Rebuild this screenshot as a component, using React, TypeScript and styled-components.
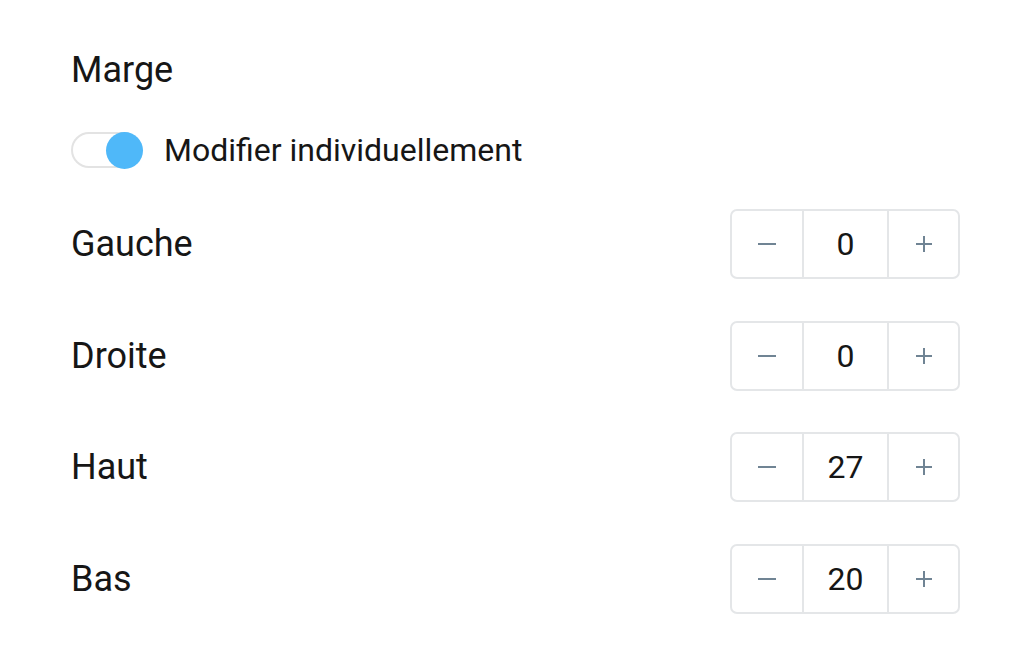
import React, { useState } from 'react';
import styled, { createGlobalStyle } from 'styled-components';

const GlobalStyle = createGlobalStyle`
  html, body {
    margin: 0;
    padding: 0;
    background: #ffffff;
  }
  body {
    font-family: Roboto, "Liberation Sans", Arial, sans-serif;
    color: #161616;
  }
`;

type Side = { key: string; label: string; value: number };

const initialSides: Side[] = [
  { key: 'left', label: 'Gauche', value: 0 },
  { key: 'right', label: 'Droite', value: 0 },
  { key: 'top', label: 'Haut', value: 27 },
  { key: 'bottom', label: 'Bas', value: 20 },
];

const MinusIcon = () => (
  <svg width="20" height="20" viewBox="0 0 20 20" aria-hidden="true">
    <line x1="1" y1="10" x2="19" y2="10" stroke="currentColor" strokeWidth="2" />
  </svg>
);

const PlusIcon = () => (
  <svg width="20" height="20" viewBox="0 0 20 20" aria-hidden="true">
    <line x1="2" y1="10" x2="18" y2="10" stroke="currentColor" strokeWidth="2" />
    <line x1="10" y1="2" x2="10" y2="18" stroke="currentColor" strokeWidth="2" />
  </svg>
);

const App: React.FC = () => {
  const [individual, setIndividual] = useState(true);
  const [sides, setSides] = useState(initialSides);

  const bump = (key: string, delta: number) =>
    setSides((s) => s.map((x) => (x.key === key ? { ...x, value: Math.max(0, x.value + delta) } : x)));

  return (
    <>
      <GlobalStyle />
      <Panel>
        <Title>Marge</Title>
        <ToggleRow>
          <Switch type="button" $on={individual} onClick={() => setIndividual((v) => !v)} aria-pressed={individual}>
            <Knob $on={individual} />
          </Switch>
          <ToggleLabel>Modifier individuellement</ToggleLabel>
        </ToggleRow>
        <Rows>
          {sides.map((side) => (
            <Row key={side.key}>
              <RowLabel>{side.label}</RowLabel>
              <Stepper>
                <StepButton type="button" onClick={() => bump(side.key, -1)} aria-label="Diminuer">
                  <MinusIcon />
                </StepButton>
                <Value>{side.value}</Value>
                <StepButton type="button" onClick={() => bump(side.key, 1)} aria-label="Augmenter">
                  <PlusIcon />
                </StepButton>
              </Stepper>
            </Row>
          ))}
        </Rows>
      </Panel>
    </>
  );
};

export default App;

const Panel = styled.div`
  box-sizing: border-box;
  width: 1024px;
  height: 651px;
  padding: 50px 64px 0 71px;
  display: flex;
  flex-direction: column;
`;

const Title = styled.div`
  height: 40px;
  line-height: 40px;
  font-size: 36px;
  font-weight: 400;
`;

const ToggleRow = styled.div`
  margin-top: 40px;
  height: 40px;
  display: flex;
  align-items: center;
  gap: 23px;
`;

const Switch = styled.button<{ $on: boolean }>`
  position: relative;
  box-sizing: border-box;
  width: 70px;
  height: 36px;
  padding: 0;
  border-radius: 18px;
  border: 2px solid #e3e3e3;
  background: #ffffff;
  cursor: pointer;
`;

const Knob = styled.span<{ $on: boolean }>`
  position: absolute;
  top: -2px;
  left: ${(p) => (p.$on ? '33px' : '-2px')};
  width: 37px;
  height: 37px;
  border-radius: 50%;
  background: ${(p) => (p.$on ? '#4fb8f9' : '#f4f4f4')};
  transition: left 150ms ease;
`;

const ToggleLabel = styled.span`
  font-size: 32px;
  line-height: 40px;
`;

const Rows = styled.div`
  margin-top: 39px;
  display: flex;
  flex-direction: column;
  gap: 41.5px;
`;

const Row = styled.div`
  display: flex;
  align-items: center;
  justify-content: space-between;
  height: 70px;
`;

const RowLabel = styled.span`
  font-size: 36px;
`;

const Stepper = styled.div`
  box-sizing: border-box;
  display: grid;
  grid-template-columns: 70px 87px 1fr;
  width: 230px;
  height: 70px;
  border: 2px solid #e4e6e8;
  border-radius: 7px;
  overflow: hidden;
`;

const StepButton = styled.button`
  display: flex;
  align-items: center;
  justify-content: center;
  border: none;
  background: transparent;
  color: #708494;
  padding: 0;
  cursor: pointer;
`;

const Value = styled.div`
  display: flex;
  align-items: center;
  justify-content: center;
  border-left: 2px solid #e4e6e8;
  border-right: 2px solid #e4e6e8;
  font-size: 32px;
  color: #161616;
`;
